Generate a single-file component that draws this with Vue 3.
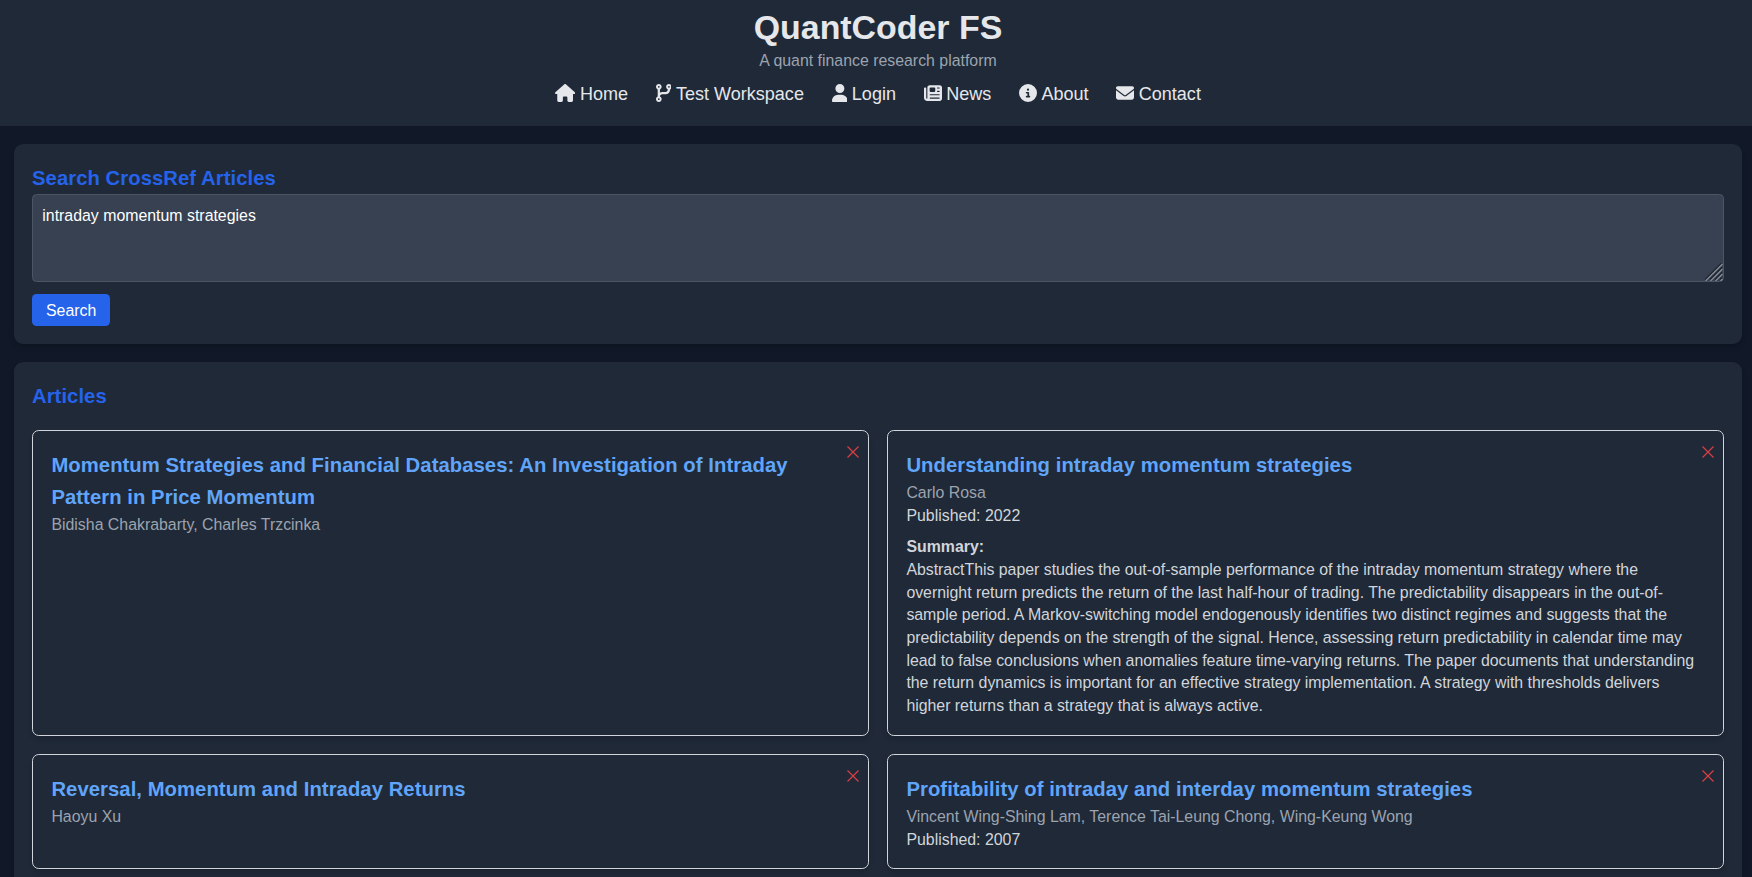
<script setup>
import { ref } from 'vue'

const query = ref('intraday momentum strategies')

const links = [
  { label: 'Home', w: 576, d: 'M575.800 255.500c0 18-15 32.100-32 32.100h-32l.7 160.200c0 2.700-.2 5.400-.5 8.100V472c0 22.100-17.900 40-40 40h-16c-1.100 0-2.200 0-3.300-.1c-1.400 .1-2.800 .1-4.200 .1H416h-24c-22.100 0-40-17.900-40-40V448 384c0-17.700-14.300-32-32-32H256c-17.700 0-32 14.300-32 32v64 24c0 22.100-17.900 40-40 40H160 128.100c-1.500 0-3-.1-4.500-.2c-1.200 .1-2.400 .2-3.600 .2H104c-22.100 0-40-17.900-40-40V360c0-.9 0-1.900 .1-2.800V287.600H32c-18 0-32-14-32-32.100c0-9 3-17 10-24L266.400 8c7-7 15-8 22-8s15 2 21 7L564.800 231.500c8 7 12 15 11 24z' },
  { label: 'Test Workspace', w: 448, d: 'M80 104a24 24 0 1 0 0-48 24 24 0 1 0 0 48zm80-24c0 32.800-19.700 61-48 73.300v87.800c18.800-10.900 40.700-17.100 64-17.100h96c35.300 0 64-28.700 64-64v-6.700C307.700 141 288 112.800 288 80c0-44.200 35.800-80 80-80s80 35.800 80 80c0 32.800-19.700 61-48 73.300V160c0 70.700-57.300 128-128 128H176c-35.300 0-64 28.700-64 64v6.700c28.300 12.300 48 40.500 48 73.300c0 44.200-35.800 80-80 80s-80-35.800-80-80c0-32.800 19.700-61 48-73.300V352 153.300C19.700 141 0 112.800 0 80C0 35.800 35.800 0 80 0s80 35.800 80 80zm232 0a24 24 0 1 0-48 0 24 24 0 1 0 48 0zM80 456a24 24 0 1 0 0-48 24 24 0 1 0 0 48z' },
  { label: 'Login', w: 448, d: 'M224 256A128 128 0 1 0 224 0a128 128 0 1 0 0 256zm-45.700 48C79.800 304 0 383.800 0 482.300C0 498.700 13.300 512 29.700 512H418.300c16.400 0 29.700-13.300 29.700-29.700C448 383.800 368.200 304 269.700 304H178.300z' },
  { label: 'News', w: 512, d: 'M96 96c0-35.300 28.700-64 64-64H448c35.300 0 64 28.700 64 64V416c0 35.300-28.700 64-64 64H80c-44.200 0-80-35.800-80-80V128c0-17.700 14.300-32 32-32s32 14.300 32 32V400c0 8.800 7.200 16 16 16s16-7.200 16-16V96zm64 24v80c0 13.300 10.700 24 24 24H296c13.300 0 24-10.700 24-24V120c0-13.300-10.700-24-24-24H184c-13.300 0-24 10.700-24 24zm208-8c0 8.800 7.200 16 16 16h48c8.800 0 16-7.200 16-16s-7.200-16-16-16H384c-8.800 0-16 7.200-16 16zm0 96c0 8.800 7.200 16 16 16h48c8.800 0 16-7.200 16-16s-7.200-16-16-16H384c-8.800 0-16 7.200-16 16zM160 304c0 8.800 7.200 16 16 16H432c8.800 0 16-7.200 16-16s-7.200-16-16-16H176c-8.800 0-16 7.200-16 16zm0 96c0 8.800 7.200 16 16 16H432c8.800 0 16-7.200 16-16s-7.200-16-16-16H176c-8.800 0-16 7.200-16 16z' },
  { label: 'About', w: 512, d: 'M256 512A256 256 0 1 0 256 0a256 256 0 1 0 0 512zM216 336h24V272H216c-13.300 0-24-10.700-24-24s10.700-24 24-24h48c13.300 0 24 10.700 24 24v88h8c13.300 0 24 10.700 24 24s-10.700 24-24 24H216c-13.300 0-24-10.700-24-24s10.700-24 24-24zm40-208a32 32 0 1 1 0 64 32 32 0 1 1 0-64z' },
  { label: 'Contact', w: 512, d: 'M48 64C21.500 64 0 85.500 0 112c0 15.100 7.100 29.300 19.200 38.400L236.800 313.600c11.400 8.500 27 8.500 38.400 0L492.800 150.400c12.100-9.100 19.200-23.300 19.200-38.400c0-26.500-21.500-48-48-48H48zM0 176V384c0 35.300 28.700 64 64 64H448c35.300 0 64-28.700 64-64V176L294.400 339.200c-22.800 17.100-54 17.100-76.800 0L0 176z' },
]

const articles = ref([
  { title: 'Momentum Strategies and Financial Databases: An Investigation of Intraday Pattern in Price Momentum', authors: 'Bidisha Chakrabarty, Charles Trzcinka' },
  {
    title: 'Understanding intraday momentum strategies',
    authors: 'Carlo Rosa',
    year: 2022,
    summary: 'AbstractThis paper studies the out-of-sample performance of the intraday momentum strategy where the overnight return predicts the return of the last half-hour of trading. The predictability disappears in the out-of-sample period. A Markov-switching model endogenously identifies two distinct regimes and suggests that the predictability depends on the strength of the signal. Hence, assessing return predictability in calendar time may lead to false conclusions when anomalies feature time-varying returns. The paper documents that understanding the return dynamics is important for an effective strategy implementation. A strategy with thresholds delivers higher returns than a strategy that is always active.',
  },
  { title: 'Reversal, Momentum and Intraday Returns', authors: 'Haoyu Xu' },
  { title: 'Profitability of intraday and interday momentum strategies', authors: 'Vincent Wing-Shing Lam, Terence Tai-Leung Chong, Wing-Keung Wong', year: 2007 },
])

function remove(i) {
  articles.value.splice(i, 1)
}
</script>

<template>
  <div class="page">
    <header class="header">
      <h1>QuantCoder FS</h1>
      <p class="tagline">A quant finance research platform</p>
      <nav class="nav">
        <a v-for="l in links" :key="l.label">
          <svg :viewBox="`0 0 ${l.w} 512`" :style="{ width: `${(l.w / 512) * 18}px` }"><path fill-rule="evenodd" :d="l.d" /></svg>
          <span>{{ l.label }}</span>
        </a>
      </nav>
    </header>

    <main>
      <section class="panel">
        <h2>Search CrossRef Articles</h2>
        <div class="field">
          <textarea v-model="query" rows="3" spellcheck="false"></textarea>
          <svg class="grip" viewBox="0 0 18 18">
            <path class="dark" d="M0 16.500L16.500 0M5 16.500L17 4.500M10 16.500L17 9.500M15 16.500L17 14.500" />
            <path class="light" d="M.5 18L17.500 1M5.500 18L17.500 6M10.500 18L17.500 11M15.500 18L17.500 16" />
          </svg>
        </div>
        <button class="search">Search</button>
      </section>

      <section class="panel">
        <h2>Articles</h2>
        <div class="grid">
          <article v-for="(a, i) in articles" :key="a.title" class="card">
            <button class="close" aria-label="Remove" @click="remove(i)">
              <svg viewBox="0 0 12 12"><path d="M.5 .5l11 11M11.500 .5l-11 11" /></svg>
            </button>
            <h3>{{ a.title }}</h3>
            <p class="authors">{{ a.authors }}</p>
            <p v-if="a.year">Published: {{ a.year }}</p>
            <div v-if="a.summary" class="summary">
              <strong>Summary:</strong>
              <p>{{ a.summary }}</p>
            </div>
          </article>
        </div>
      </section>
    </main>
  </div>
</template>

<style>
body {
  background: #111827;
  overflow: hidden;
}
</style>

<style scoped>
.page {
  height: 877px;
  overflow: hidden;
  background: #111827;
  color: #e5e7eb;
  font: 15.89px/22.7px "Liberation Sans", Arial, sans-serif;
}
h1, h2, h3, p { margin: 0; }
.header {
  box-sizing: border-box;
  height: 126px;
  padding: 7px 0 0 4px;
  background: #1f2937;
  text-align: center;
}
h1 {
  font-size: 33.9px;
  line-height: 40px;
}
.tagline {
  padding-top: 3px;
}
.tagline, .authors { color: #9ca3af; }
.nav {
  display: flex;
  justify-content: center;
  gap: 27.6px;
  margin-top: 7px;
  font-size: 18.05px;
  line-height: 27px;
}
.nav a {
  display: flex;
  align-items: center;
  gap: 4.6px;
}
.nav svg {
  height: 18px;
  fill: #e5e7eb;
}
.nav span {
  padding-top: 1px;
  margin-bottom: -1px;
}
main {
  display: flex;
  flex-direction: column;
  gap: 18px;
  padding: 18px 10px 0 14px;
}
.panel {
  padding: 18px;
  border-radius: 9px;
  background: #1f2937;
  box-shadow: 0 4px 6px -1px rgba(0, 0, 0, .1), 0 2px 4px -2px rgba(0, 0, 0, .1);
}
h2, h3 {
  font-size: 20.25px;
  line-height: 32px;
  letter-spacing: .06px;
}
h2 { color: #2563eb; }
h3 {
  margin-bottom: 1px;
  color: #60a5fa;
}
.field {
  position: relative;
  height: 88px;
  margin-bottom: 12px;
}
textarea {
  display: block;
  box-sizing: border-box;
  width: 100%;
  height: 88px;
  margin: 0;
  padding: 10px 10px 8px 9.3px;
  border: 1px solid #4b5563;
  border-radius: 4.5px;
  outline: none;
  background: #374151;
  color: #fff;
  font: inherit;
  resize: none;
}
.grip {
  position: absolute;
  right: 1px;
  bottom: 1px;
  width: 18px;
  height: 18px;
  fill: none;
}
.grip .dark { stroke: #1d232d; stroke-width: 1.1; }
.grip .light { stroke: #8b919a; stroke-width: 1.1; }
.search {
  display: block;
  height: 32px;
  padding: 2px 13.5px 0 14px;
  border: 0;
  border-radius: 4.5px;
  background: #2563eb;
  color: #fff;
  font: inherit;
}
.grid {
  display: grid;
  grid-template-columns: 1fr 1fr;
  gap: 18px;
  margin-top: 18px;
}
.card {
  position: relative;
  padding: 17.8px 18px 17.2px 18.4px;
  border: 1px solid #d1d5db;
  border-radius: 6.75px;
  color: #d1d5db;
  background: #1f2937;
  box-shadow: 0 4px 6px -1px rgba(0, 0, 0, .1), 0 2px 4px -2px rgba(0, 0, 0, .1);
}
.close {
  position: absolute;
  top: 14.5px;
  right: 9px;
  width: 12px;
  height: 12px;
  padding: 0;
  border: 0;
  background: none;
}
.close svg {
  display: block;
  fill: none;
  stroke: #dc3f43;
  stroke-width: 1.2;
}
.summary {
  margin-top: 9px;
}
.summary strong { display: block; }
.summary p { letter-spacing: -.017px; }
</style>
